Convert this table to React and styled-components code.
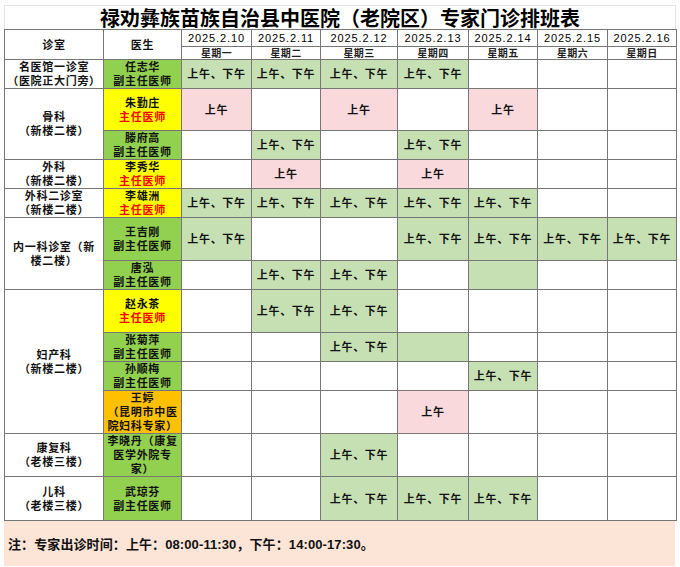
import React from 'react';
import styled, { createGlobalStyle } from 'styled-components';

const GREEN = '#c6e0b4';
const PINK = '#f9d9dc';
const DOC_GREEN = '#92d050';
const DOC_YELLOW = '#ffff00';
const DOC_ORANGE = '#ffc000';

const days = [
  ['2025.2.10', '星期一'],
  ['2025.2.11', '星期二'],
  ['2025.2.12', '星期三'],
  ['2025.2.13', '星期四'],
  ['2025.2.14', '星期五'],
  ['2025.2.15', '星期六'],
  ['2025.2.16', '星期日'],
];

const colWidths = [99, 78, 70, 69, 77, 71, 69, 70, 69];

const A = { bg: GREEN, text: '上午、下午' };
const M = { bg: PINK, text: '上午' };
const E = { bg: GREEN, text: '' };
const _ = null;

const rows = [
  { h: 29, dept: ['名医馆一诊室', '（医院正大门旁）'], span: 1, doc: ['任志华', '副主任医师'], docBg: DOC_GREEN, slots: [A, A, A, A, _, _, _] },
  { h: 42, dept: ['骨科', '（新楼二楼）'], span: 2, doc: ['朱勤庄', '主任医师'], docBg: DOC_YELLOW, slots: [M, _, M, _, M, _, _] },
  { h: 28, doc: ['滕府高', '副主任医师'], docBg: DOC_GREEN, slots: [_, A, _, A, _, _, _] },
  { h: 29, dept: ['外科', '（新楼二楼）'], span: 1, doc: ['李秀华', '主任医师'], docBg: DOC_YELLOW, slots: [_, M, _, M, _, _, _] },
  { h: 29, dept: ['外科二诊室', '（新楼二楼）'], span: 1, doc: ['李雄洲', '主任医师'], docBg: DOC_YELLOW, slots: [A, A, A, A, A, _, _] },
  { h: 43, dept: ['内一科诊室（新', '楼二楼）'], span: 2, doc: ['王吉刚', '副主任医师'], docBg: DOC_GREEN, slots: [A, _, _, A, A, A, A] },
  { h: 28, doc: ['唐泓', '副主任医师'], docBg: DOC_GREEN, slots: [_, A, A, _, E, _, _] },
  { h: 43, dept: ['妇产科', '（新楼二楼）'], span: 4, doc: ['赵永茶', '主任医师'], docBg: DOC_YELLOW, slots: [_, A, A, _, _, _, _] },
  { h: 28, doc: ['张菊萍', '副主任医师'], docBg: DOC_GREEN, slots: [_, _, A, E, _, _, _] },
  { h: 29, doc: ['孙顺梅', '副主任医师'], docBg: DOC_GREEN, slots: [_, _, _, _, A, _, _] },
  { h: 43, doc: ['王婷', '（昆明市中医', '院妇科专家）'], docBg: DOC_ORANGE, slots: [_, _, _, M, _, _, _] },
  { h: 43, dept: ['康复科', '（老楼三楼）'], span: 1, doc: ['李晓丹（康复', '医学外院专', '家）'], docBg: DOC_GREEN, slots: [_, _, A, _, _, _, _] },
  { h: 44, dept: ['儿科', '（老楼三楼）'], span: 1, doc: ['武琼芬', '副主任医师'], docBg: DOC_GREEN, slots: [_, _, A, A, A, _, _] },
];

// Liberation Sans first keeps the line boxes tight; the CJK glyphs fall through to Noto
const GlobalStyle = createGlobalStyle`
  body {
    margin: 0;
    background: #fff;
    font-family: "Liberation Sans", "Noto Sans CJK SC", sans-serif;
    color: #111;
  }
`;

const Page = styled.div`
  width: 672px;
  padding: 5px 4px 0 4px;
`;

const Title = styled.div`
  height: 24px;
  display: flex;
  align-items: center;
  justify-content: center;
  box-sizing: border-box;
  border: 1px solid #e4e4e4;
  border-bottom: none;
  font-size: 20px;
  font-weight: 700;
  color: #000;
`;

const Sheet = styled.table`
  width: 672px;
  border-collapse: collapse;
  table-layout: fixed;
`;

const Row = styled.tr`
  height: ${p => p.$h}px;
`;

const Cell = styled.td`
  border: 1px solid #767676;
  background: ${p => p.$bg || '#fff'};
  padding: 0;
  text-align: center;
  vertical-align: middle;
  font-size: 11px;
  font-weight: 700;
  letter-spacing: 0.7px;
  line-height: 14px;
  color: #111;
  white-space: nowrap;
`;

const DateCell = styled(Cell)`
  font-size: 11px;
  font-weight: 400;
  letter-spacing: 0.9px;
  line-height: 12px;
  color: #000;
`;

const DayCell = styled(Cell)`
  font-size: 10px;
  letter-spacing: 0.3px;
  line-height: 11px;
  color: #222;
`;

const Line = styled.div`
  color: ${p => (p.$red ? '#ff0000' : 'inherit')};
`;

const Note = styled.div`
  height: 45px;
  width: 671px;
  display: flex;
  align-items: center;
  box-sizing: border-box;
  padding-left: 4px;
  background: #fce4d6;
  font-size: 13px;
  font-weight: 700;
  letter-spacing: 0.1px;
  color: #111;
`;

const Lines = ({ items }) =>
  items.map((t, i) => (
    <Line key={i} $red={t === '主任医师'}>{t}</Line>
  ));

export default function App() {
  return (
    <Page>
      <GlobalStyle />
      <Title>禄劝彝族苗族自治县中医院（老院区）专家门诊排班表</Title>
      <Sheet>
        <colgroup>
          {colWidths.map((w, i) => <col key={i} style={{ width: w }} />)}
        </colgroup>
        <tbody>
          <Row $h={17}>
            <Cell rowSpan={2}>诊室</Cell>
            <Cell rowSpan={2}>医生</Cell>
            {days.map(([d]) => <DateCell key={d}>{d}</DateCell>)}
          </Row>
          <Row $h={13}>
            {days.map(([d, w]) => <DayCell key={w}>{w}</DayCell>)}
          </Row>
          {rows.map((r, i) => (
            <Row key={i} $h={r.h}>
              {r.dept && (
                <Cell rowSpan={r.span}>
                  <Lines items={r.dept} />
                </Cell>
              )}
              <Cell $bg={r.docBg}>
                <Lines items={r.doc} />
              </Cell>
              {r.slots.map((s, j) => (
                <Cell key={j} $bg={s ? s.bg : null}>{s ? s.text : ''}</Cell>
              ))}
            </Row>
          ))}
        </tbody>
      </Sheet>
      <Note>注：专家出诊时间：上午：08:00-11:30，下午：14:00-17:30。</Note>
    </Page>
  );
}
